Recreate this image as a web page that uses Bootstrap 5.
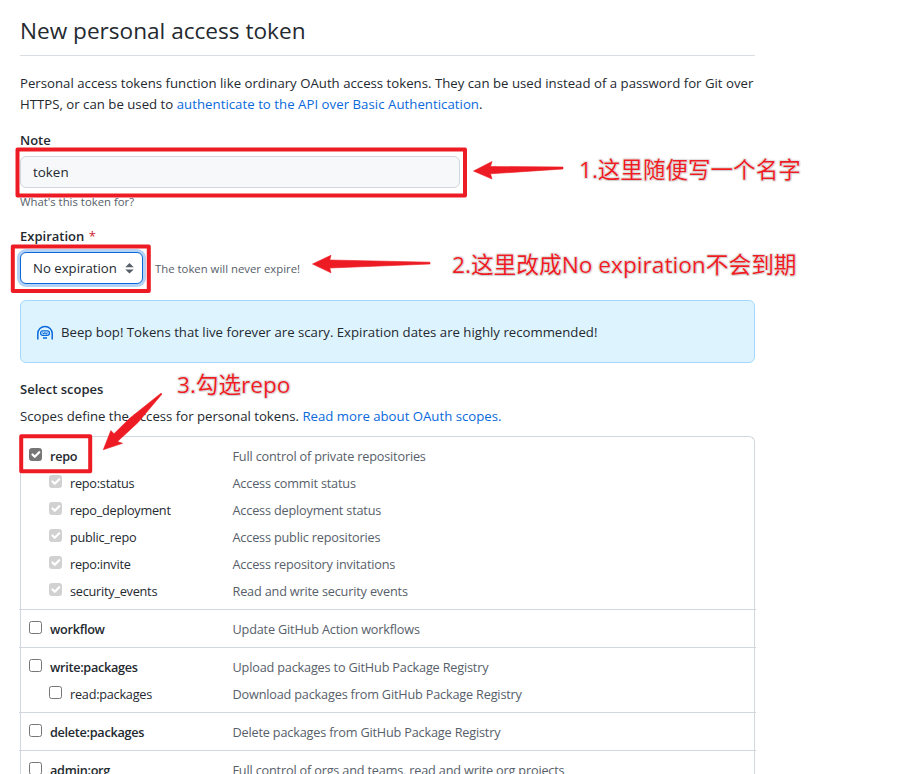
<!DOCTYPE html>
<html lang="en">
<head>
<meta charset="utf-8">
<title>New personal access token</title>
<meta name="viewport" content="width=device-width, initial-scale=1">
<link href="https://cdn.jsdelivr.net/npm/bootstrap@5.3.0/dist/css/bootstrap.min.css" rel="stylesheet">
<style>
body{font-family:"Open Sans","Noto Sans CJK SC",sans-serif;font-size:13.2px;line-height:21px;color:#24292f;background:#fff;height:774px;overflow:hidden}
a{color:#0969da;text-decoration:none}
.settings{width:735px;margin-left:20px}
.page-title{font-size:22.6px;line-height:36px;font-weight:400;padding:13px 0 6px;margin:0 0 17px;border-bottom:1px solid #d8dee4}
.intro{letter-spacing:.012px}
.intro a{letter-spacing:.04px}
.note-block{padding-top:15px}
.expiry-block{padding-top:19px}
.field-label{font-size:13px;font-weight:600;line-height:20px;display:block}
.required{color:#cf222e;margin-left:1px}
.hint{font-size:11.35px;color:#57606a}
.note-input{width:440px;height:32px;padding:0 12px;margin:6px 0 4px;font-size:13.4px;color:#24292f;background:#f6f8fa;border:1px solid #d0d7de;border-radius:6px}
.expiry-line{padding-top:6px}
.expiry{width:123px;height:32px;padding:0 8px 0 12px;border:1px solid #0969da;border-radius:6px;box-shadow:0 0 0 3px rgba(9,105,218,.3);background:#fff}
.notice{height:63px;margin:16px 0;padding:2px 16px 0;background:#ddf4ff;border:1px solid #a6d8ff;border-radius:6px}
.scopes-lead{margin:7px 0 9px}
.scopes{border:1px solid #d0d7de;border-bottom:0;border-radius:6px 6px 0 0;font-size:12.7px}
.scope-group{padding:5px 0}
.scope-group+.scope-group{border-top:1px solid #d0d7de;margin:0 -2px;padding-left:2px}
.scope-row{height:27px;padding:2px 0 0 8px}
.scope-name{width:203.5px;letter-spacing:-.24px}
.scope-row.top .scope-name{font-weight:600;letter-spacing:-.3px}
.scope-row.sub .scope-name{padding-left:20px}
.scope-text{color:#57606a;letter-spacing:-.18px}
.form-check-input.box{width:13px;height:13px;margin:0 8px 4px 0;border:1px solid #767676;border-radius:2.5px;flex:none;box-shadow:none}
.form-check-input.box:checked{background-color:#767676;background-size:15px 15px;border-color:#767676}
.form-check-input.box:disabled{opacity:1;background-color:#d1d1d1;border-color:#d1d1d1}
.markup{position:absolute;left:0;top:0;pointer-events:none}
.callout{position:absolute;font-size:22.6px;line-height:30px;color:#ed1c24;white-space:nowrap;text-shadow:0 0 1px #fff,1px 1px 1px #ccc,-1px -1px 1px #ddd,1px -1px 1px #ddd,-1px 1px 1px #ddd}
.callout-name{left:579px;top:155px;font-size:22.55px}
.callout-expiry{left:452px;top:250px;font-size:22.7px}
.callout-repo{left:177px;top:370px}
</style>
</head>
<body class="position-relative">
<main class="settings">
  <h1 class="page-title">New personal access token</h1>
  <p class="intro mb-0 text-nowrap">Personal access tokens function like ordinary OAuth access tokens. They can be used instead of a password for Git over<br>HTTPS, or can be used to&nbsp;<a href="#">authenticate to the API over Basic Authentication</a>.</p>

  <div class="note-block">
    <label class="field-label" for="note">Note</label>
    <input id="note" class="note-input d-block" value="token">
    <div class="hint lh-1 pt-1">What's this token for?</div>
  </div>

  <div class="expiry-block">
    <span class="field-label">Expiration <span class="required fw-normal">*</span></span>
    <div class="expiry-line d-flex align-items-center">
      <div class="expiry d-flex align-items-center justify-content-between" role="button">No expiration
        <svg width="9" height="11" viewBox="0 0 9 11" fill="#57606a"><path d="M4.5 0 8.7 4.2H.3zM.3 6.4h8.4L4.5 10.6z"/></svg>
      </div>
      <span class="hint ps-2 ms-1">The token will never expire!</span>
    </div>
  </div>

  <div class="notice d-flex align-items-center">
    <svg class="me-2" width="16" height="16" viewBox="0 0 16 16" fill="none" stroke="#0969da" stroke-width="1.5">
      <path d="M.8 14.5V8.6a7.2 7.2 0 0 1 14.4 0v5.9"/><rect x="3.6" y="5.8" width="8.8" height="4.6" rx="2.1" stroke-width="1.3"/><path d="M5.4 7.5 6.6 8.8 8 7.6l1.4 1.2 1.2-1.3" stroke-width="1.1"/><path d="M6 13h4"/>
    </svg>
    <span>Beep bop! Tokens that live forever are scary. Expiration dates are highly recommended!</span>
  </div>

  <span class="field-label">Select scopes</span>
  <p class="scopes-lead text-nowrap">Scopes define the access for personal tokens. <a href="#">Read more about OAuth scopes.</a></p>

  <div class="scopes">
    <div class="scope-group">
      <div class="scope-row top d-flex align-items-center"><label class="scope-name d-flex align-items-center"><input class="form-check-input box" type="checkbox" checked>repo</label><span class="scope-text">Full control of private repositories</span></div>
      <div class="scope-row sub d-flex align-items-center"><label class="scope-name d-flex align-items-center"><input class="form-check-input box" type="checkbox" checked disabled><span>repo:status</span></label><span class="scope-text">Access commit status</span></div>
      <div class="scope-row sub d-flex align-items-center"><label class="scope-name d-flex align-items-center"><input class="form-check-input box" type="checkbox" checked disabled><span>repo_deployment</span></label><span class="scope-text">Access deployment status</span></div>
      <div class="scope-row sub d-flex align-items-center"><label class="scope-name d-flex align-items-center"><input class="form-check-input box" type="checkbox" checked disabled><span>public_repo</span></label><span class="scope-text">Access public repositories</span></div>
      <div class="scope-row sub d-flex align-items-center"><label class="scope-name d-flex align-items-center"><input class="form-check-input box" type="checkbox" checked disabled><span>repo:invite</span></label><span class="scope-text">Access repository invitations</span></div>
      <div class="scope-row sub d-flex align-items-center"><label class="scope-name d-flex align-items-center"><input class="form-check-input box" type="checkbox" checked disabled><span>security_events</span></label><span class="scope-text">Read and write security events</span></div>
    </div>
    <div class="scope-group">
      <div class="scope-row top d-flex align-items-center"><label class="scope-name d-flex align-items-center"><input class="form-check-input box" type="checkbox">workflow</label><span class="scope-text">Update GitHub Action workflows</span></div>
    </div>
    <div class="scope-group">
      <div class="scope-row top d-flex align-items-center"><label class="scope-name d-flex align-items-center"><input class="form-check-input box" type="checkbox">write:packages</label><span class="scope-text">Upload packages to GitHub Package Registry</span></div>
      <div class="scope-row sub d-flex align-items-center"><label class="scope-name d-flex align-items-center"><input class="form-check-input box" type="checkbox">read:packages</label><span class="scope-text">Download packages from GitHub Package Registry</span></div>
    </div>
    <div class="scope-group">
      <div class="scope-row top d-flex align-items-center"><label class="scope-name d-flex align-items-center"><input class="form-check-input box" type="checkbox">delete:packages</label><span class="scope-text">Delete packages from GitHub Package Registry</span></div>
    </div>
    <div class="scope-group">
      <div class="scope-row top d-flex align-items-center"><label class="scope-name d-flex align-items-center"><input class="form-check-input box" type="checkbox">admin:org</label><span class="scope-text">Full control of orgs and teams, read and write org projects</span></div>
    </div>
  </div>
</main>

<svg class="markup" width="901" height="774" viewBox="0 0 901 774">
  <g fill="none" stroke="#ed1c24" stroke-width="4" stroke-linejoin="round">
    <rect x="17.5" y="149.5" width="447.5" height="46"/>
    <rect x="12.8" y="246.5" width="136" height="44.5"/>
    <rect x="21.2" y="436.2" width="69" height="35"/>
  </g>
  <g fill="#ed1c24" stroke="#ed1c24" stroke-width=".6" stroke-linejoin="round">
    <path d="M473.5 171 492 161.5 490.5 166.5 563 167V169L490.5 173.8 492 179Z"/>
    <path d="M312.5 264 331 255.3 329.8 260 430 262.2V264L329.8 268 331 272.8Z"/>
    <path d="M103.3 449.7 110.8 430.6 114 433.7 130 418 161 393.2 162 394 138 422.5 117.5 441.5 122.5 443.3Z"/>
  </g>
</svg>
<div class="callout callout-name" lang="zh">1.这里随便写一个名字</div>
<div class="callout callout-expiry" lang="zh">2.这里改成No expiration不会到期</div>
<div class="callout callout-repo" lang="zh">3.勾选repo</div>
<script src="https://cdn.jsdelivr.net/npm/bootstrap@5.3.0/dist/js/bootstrap.bundle.min.js"></script>
</body>
</html>
